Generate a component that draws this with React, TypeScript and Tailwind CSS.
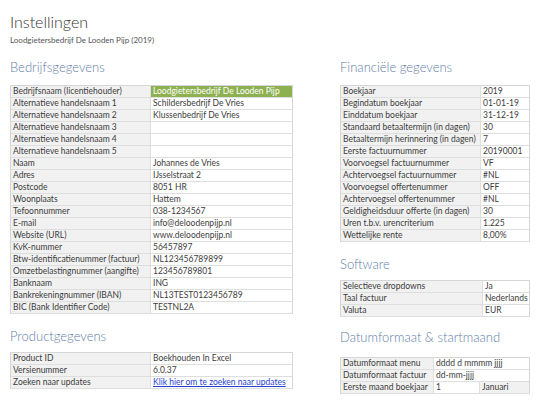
import * as React from "react";

type Row = { label: string; value?: React.ReactNode; extra?: string; highlight?: boolean };

const bedrijf: Row[] = [
    { label: "Bedrijfsnaam (licentiehouder)", value: "Loodgietersbedrijf De Looden Pijp", highlight: true },
    { label: "Alternatieve handelsnaam 1", value: "Schildersbedrijf De Vries" },
    { label: "Alternatieve handelsnaam 2", value: "Klussenbedrijf De Vries" },
    { label: "Alternatieve handelsnaam 3" },
    { label: "Alternatieve handelsnaam 4" },
    { label: "Alternatieve handelsnaam 5" },
    { label: "Naam", value: "Johannes de Vries" },
    { label: "Adres", value: "IJsselstraat 2" },
    { label: "Postcode", value: "8051 HR" },
    { label: "Woonplaats", value: "Hattem" },
    { label: "Tefoonnummer", value: "038-1234567" },
    { label: "E-mail", value: "info@deloodenpijp.nl" },
    { label: "Website (URL)", value: "www.deloodenpijp.nl" },
    { label: "KvK-nummer", value: "56457897" },
    { label: "Btw-identificatienummer (factuur)", value: "NL123456789899" },
    { label: "Omzetbelastingnummer (aangifte)", value: "123456789801" },
    { label: "Banknaam", value: "ING" },
    { label: "Bankrekeningnummer (IBAN)", value: "NL13TEST0123456789" },
    { label: "BIC (Bank Identifier Code)", value: "TESTNL2A" },
];

const financieel: Row[] = [
    { label: "Boekjaar", value: "2019" },
    { label: "Begindatum boekjaar", value: "01-01-19" },
    { label: "Einddatum boekjaar", value: "31-12-19" },
    { label: "Standaard betaaltermijn (in dagen)", value: "30" },
    { label: "Betaaltermijn herinnering (in dagen)", value: "7" },
    { label: "Eerste factuurnummer", value: "20190001" },
    { label: "Voorvoegsel factuurnummer", value: "VF" },
    { label: "Achtervoegsel factuurnummer", value: "#NL" },
    { label: "Voorvoegsel offertenummer", value: "OFF" },
    { label: "Achtervoegsel offertenummer", value: "#NL" },
    { label: "Geldigheidsduur offerte (in dagen)", value: "30" },
    { label: "Uren t.b.v. urencriterium", value: "1.225" },
    { label: "Wettelijke rente", value: "8,00%" },
];

const software: Row[] = [
    { label: "Selectieve dropdowns", value: "Ja" },
    { label: "Taal factuur", value: "Nederlands" },
    { label: "Valuta", value: "EUR" },
];

const datum: Row[] = [
    { label: "Datumformaat menu", value: <>dddd d mmmm <span className="underline decoration-dotted decoration-[#999]">jjjj</span></> },
    { label: "Datumformaat factuur", value: <>dd-mm-<span className="underline decoration-dotted decoration-[#999]">jjjj</span></> },
    { label: "Eerste maand boekjaar", value: "1", extra: "Januari" },
];

function Heading({ children, className }: { children: React.ReactNode; className?: string }) {
    return (
        <div className={`h-[20px] leading-[20px] text-[13px] font-light text-[#5f7ea9] ${className ?? ""}`}>
            {children}
        </div>
    );
}

function Table({ rows, labelWidth, extraWidth }: { rows: Row[]; labelWidth: string; extraWidth?: string }) {
    return (
        <div className="border border-[#d6d6d6] border-b-0">
            {rows.map((row, i) => (
                <div key={i} className="flex h-[12px] border-b border-[#dedede] text-[8.5px] leading-[11px] text-[#3c3c3c]">
                    <div className={`${labelWidth} shrink-0 bg-[#f1f1f1] border-r border-[#dedede] pl-[2px] whitespace-nowrap overflow-hidden`}>
                        {row.label}
                    </div>
                    <div
                        className={`flex-1 pl-[2px] whitespace-nowrap overflow-hidden ${
                            row.highlight ? "bg-[#8db050] text-white" : "bg-white"
                        } ${row.extra ? "border-r border-[#dedede]" : ""}`}
                    >
                        {row.value}
                    </div>
                    {row.extra && (
                        <div className={`${extraWidth} shrink-0 bg-[#f1f1f1] pl-[2px] whitespace-nowrap`}>{row.extra}</div>
                    )}
                </div>
            ))}
        </div>
    );
}

export default function App() {
    return (
        <div className="w-[540px] h-[403px] bg-white px-[10px] overflow-hidden font-['Lato',sans-serif]">
            <div className="pt-[12px]">
                <div className="h-[20px] leading-[20px] text-[16px] font-light text-[#333]">Instellingen</div>
                <div className="mt-[2px] h-[12px] leading-[12px] text-[8px] text-[#555]">
                    Loodgietersbedrijf De Looden Pijp (2019)
                </div>
            </div>
            <div className="flex mt-[11px]">
                <div className="w-[283px] shrink-0">
                    <Heading className="mb-[8px]">Bedrijfsgegevens</Heading>
                    <Table rows={bedrijf} labelWidth="w-[140px]" />
                    <Heading className="mt-[12px] mb-[6px]">Productgegevens</Heading>
                    <Table
                        labelWidth="w-[140px]"
                        rows={[
                            { label: "Product ID", value: "Boekhouden In Excel" },
                            { label: "Versienummer", value: "6.0.37" },
                            {
                                label: "Zoeken naar updates",
                                value: <span className="text-[#2a3fd0] underline">Klik hier om te zoeken naar updates</span>,
                            },
                        ]}
                    />
                </div>
                <div className="ml-[47px] w-[190px] shrink-0">
                    <Heading className="mb-[8px]">Financiële gegevens</Heading>
                    <Table rows={financieel} labelWidth="w-[140px]" />
                    <Heading className="mt-[12px] mb-[6px]">Software</Heading>
                    <Table rows={software} labelWidth="w-[142px]" />
                    <Heading className="mt-[10px] mb-[10px]">Datumformaat &amp; startmaand</Heading>
                    <Table rows={datum} labelWidth="w-[93px]" extraWidth="w-[49px]" />
                </div>
            </div>
        </div>
    );
}
